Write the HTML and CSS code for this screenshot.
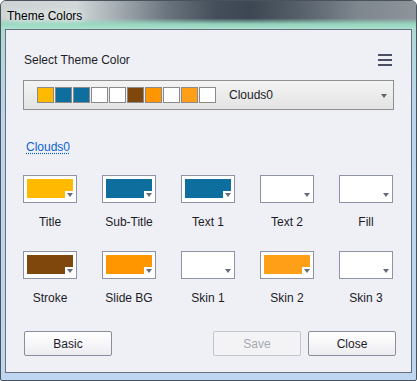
FILE: index.html
```html
<!DOCTYPE html>
<html>
<head>
<meta charset="utf-8">
<link rel="stylesheet" href="styles.css">
</head>
<body>
<div class="window">
  <div class="titlebar"><span class="title">Theme Colors</span></div>
  <div class="client">
    <div class="header">
      <span class="heading">Select Theme Color</span>
      <span class="menu"><i></i><i></i><i></i></span>
    </div>
    <div class="dropdown">
      <div class="swatches">
        <span class="sw" style="background:#ffba00"></span>
        <span class="sw" style="background:#0e6e9e"></span>
        <span class="sw" style="background:#0e6e9e"></span>
        <span class="sw" style="background:#ffffff"></span>
        <span class="sw" style="background:#ffffff"></span>
        <span class="sw" style="background:#7f470b"></span>
        <span class="sw" style="background:#ff9600"></span>
        <span class="sw" style="background:#ffffff"></span>
        <span class="sw" style="background:#ff9f17"></span>
        <span class="sw" style="background:#ffffff"></span>
      </div>
      <span class="dd-text">Clouds0</span>
      <span class="dd-arrow"></span>
    </div>
    <div class="linkrow"><a class="link">Clouds0</a></div>
    <div class="grid">
      <div class="cell"><div class="box"><div class="fill" style="background:#ffba00"></div><span class="arrow"></span></div><span class="label">Title</span></div>
      <div class="cell"><div class="box"><div class="fill" style="background:#0e6e9e"></div><span class="arrow"></span></div><span class="label">Sub-Title</span></div>
      <div class="cell"><div class="box"><div class="fill" style="background:#0e6e9e"></div><span class="arrow"></span></div><span class="label">Text 1</span></div>
      <div class="cell"><div class="box"><div class="fill" style="background:#ffffff"></div><span class="arrow"></span></div><span class="label">Text 2</span></div>
      <div class="cell"><div class="box"><div class="fill" style="background:#ffffff"></div><span class="arrow"></span></div><span class="label">Fill</span></div>
      <div class="cell"><div class="box"><div class="fill" style="background:#7f470b"></div><span class="arrow"></span></div><span class="label">Stroke</span></div>
      <div class="cell"><div class="box"><div class="fill" style="background:#ff9600"></div><span class="arrow"></span></div><span class="label">Slide BG</span></div>
      <div class="cell"><div class="box"><div class="fill" style="background:#ffffff"></div><span class="arrow"></span></div><span class="label">Skin 1</span></div>
      <div class="cell"><div class="box"><div class="fill" style="background:#ff9f17"></div><span class="arrow"></span></div><span class="label">Skin 2</span></div>
      <div class="cell"><div class="box"><div class="fill" style="background:#ffffff"></div><span class="arrow"></span></div><span class="label">Skin 3</span></div>
    </div>
    <div class="buttons">
      <button class="btn basic">Basic</button>
      <span class="spacer"></span>
      <button class="btn disabled">Save</button>
      <button class="btn">Close</button>
    </div>
  </div>
</div>
</body>
</html>
```

FILE: styles.css
```css
html, body {
  margin: 0;
  padding: 0;
  background: #ffffff;
}
body {
  font-family: "Liberation Sans", Arial, sans-serif;
  font-size: 12px;
  color: #1c1c24;
}
.window {
  width: 417px;
  height: 381px;
  box-sizing: border-box;
  border: 1px solid #4a525c;
  border-radius: 6px 6px 2px 2px;
  background: linear-gradient(to bottom, #a6dac8 0, #b4d8e0 60px, #bcd5ee 120px, #bed6ef 100%);
  display: flex;
  flex-direction: column;
  overflow: hidden;
}
.titlebar {
  height: 28px;
  flex: none;
  box-sizing: border-box;
  padding: 8px 0 0 6px;
  background:
    linear-gradient(to bottom, rgba(168,224,204,0) 0, rgba(168,224,204,0) 62%, rgba(150,216,192,0.95) 82%, rgba(170,226,206,1) 100%),
    linear-gradient(to right, #cdd3d3 0, #d2d8d8 18%, #a4acb2 28%, #6a747e 40%, #434e5a 52%, #3d4753 60%, #56606a 72%, #7e868e 86%, #8e949a 100%);
}
.title {
  line-height: 14px;
  color: #000;
  text-shadow: 0 0 6px #e8eeee, 0 0 10px #e8eeee;
}
.client {
  flex: 1;
  margin: 0 4px 7px 4px;
  border: 1px solid #687080;
  background: #eff0f5;
  padding: 0 17px 16px 17px;
  display: flex;
  flex-direction: column;
}
.header {
  margin-top: 23px;
  height: 14px;
  display: flex;
  align-items: center;
  justify-content: space-between;
  padding-left: 1px;
}
.heading {
  line-height: 14px;
  color: #1c1c28;
}
.menu {
  width: 14px;
  height: 12px;
  margin-right: 2px;
  display: flex;
  flex-direction: column;
  justify-content: space-between;
}
.menu i {
  display: block;
  height: 2px;
  background: #4b5363;
}
.dropdown {
  margin-top: 13px;
  height: 30px;
  box-sizing: border-box;
  border: 1px solid #8e8f90;
  background: linear-gradient(to bottom, #f4f4f4 0, #ebebeb 50%, #e3e3e3 100%);
  display: flex;
  align-items: center;
  padding-left: 13px;
  padding-right: 6px;
}
.swatches {
  display: flex;
  gap: 1px;
}
.sw {
  display: block;
  width: 17px;
  height: 16px;
  box-sizing: border-box;
  border: 1px solid #8a8a8a;
}
.dd-text {
  margin-left: 13px;
  flex: 1;
  color: #1c1c28;
}
.dd-arrow {
  width: 0;
  height: 0;
  border-left: 3.5px solid transparent;
  border-right: 3.5px solid transparent;
  border-top: 4px solid #646464;
  margin-top: 2px;
}
.linkrow {
  margin-top: 30px;
  line-height: 14px;
  padding-left: 3px;
}
.link {
  color: #0a62d8;
  text-decoration: underline dotted #0a62d8;
  text-underline-offset: 2px;
}
.grid {
  margin-top: 21px;
  display: grid;
  grid-template-columns: repeat(5, 54px);
  column-gap: 25px;
  row-gap: 22px;
}
.cell {
  display: flex;
  flex-direction: column;
  align-items: center;
}
.box {
  position: relative;
  width: 54px;
  height: 28px;
  box-sizing: border-box;
  border: 1px solid #8e94a6;
  background: #ffffff;
  padding: 3px 3px 4px 3px;
}
.fill {
  height: 100%;
  clip-path: polygon(0 0, 100% 0, 100% 12px, calc(100% - 8px) 12px, calc(100% - 8px) 100%, 0 100%);
}
.arrow {
  position: absolute;
  right: 3px;
  bottom: 5px;
  width: 0;
  height: 0;
  border-left: 3.5px solid transparent;
  border-right: 3.5px solid transparent;
  border-top: 4px solid #666c7c;
}
.label {
  margin-top: 12px;
  line-height: 14px;
  color: #1c1c28;
  white-space: nowrap;
}
.buttons {
  margin-top: 26px;
  display: flex;
  padding-left: 1px;
  margin-right: -2px;
  gap: 7px;
}
.spacer {
  flex: 1;
}
.btn {
  width: 88px;
  height: 25px;
  box-sizing: border-box;
  border: 1px solid #8a8e9a;
  border-radius: 2px;
  background: linear-gradient(to bottom, #ffffff 0, #f7f7f9 50%, #ececf0 100%);
  font-family: "Liberation Sans", Arial, sans-serif;
  font-size: 12px;
  color: #1c1c28;
  padding: 0;
}
.btn.disabled {
  border-color: #c4c6ce;
  background: #f3f3f6;
  color: #a7a9b2;
}
```
